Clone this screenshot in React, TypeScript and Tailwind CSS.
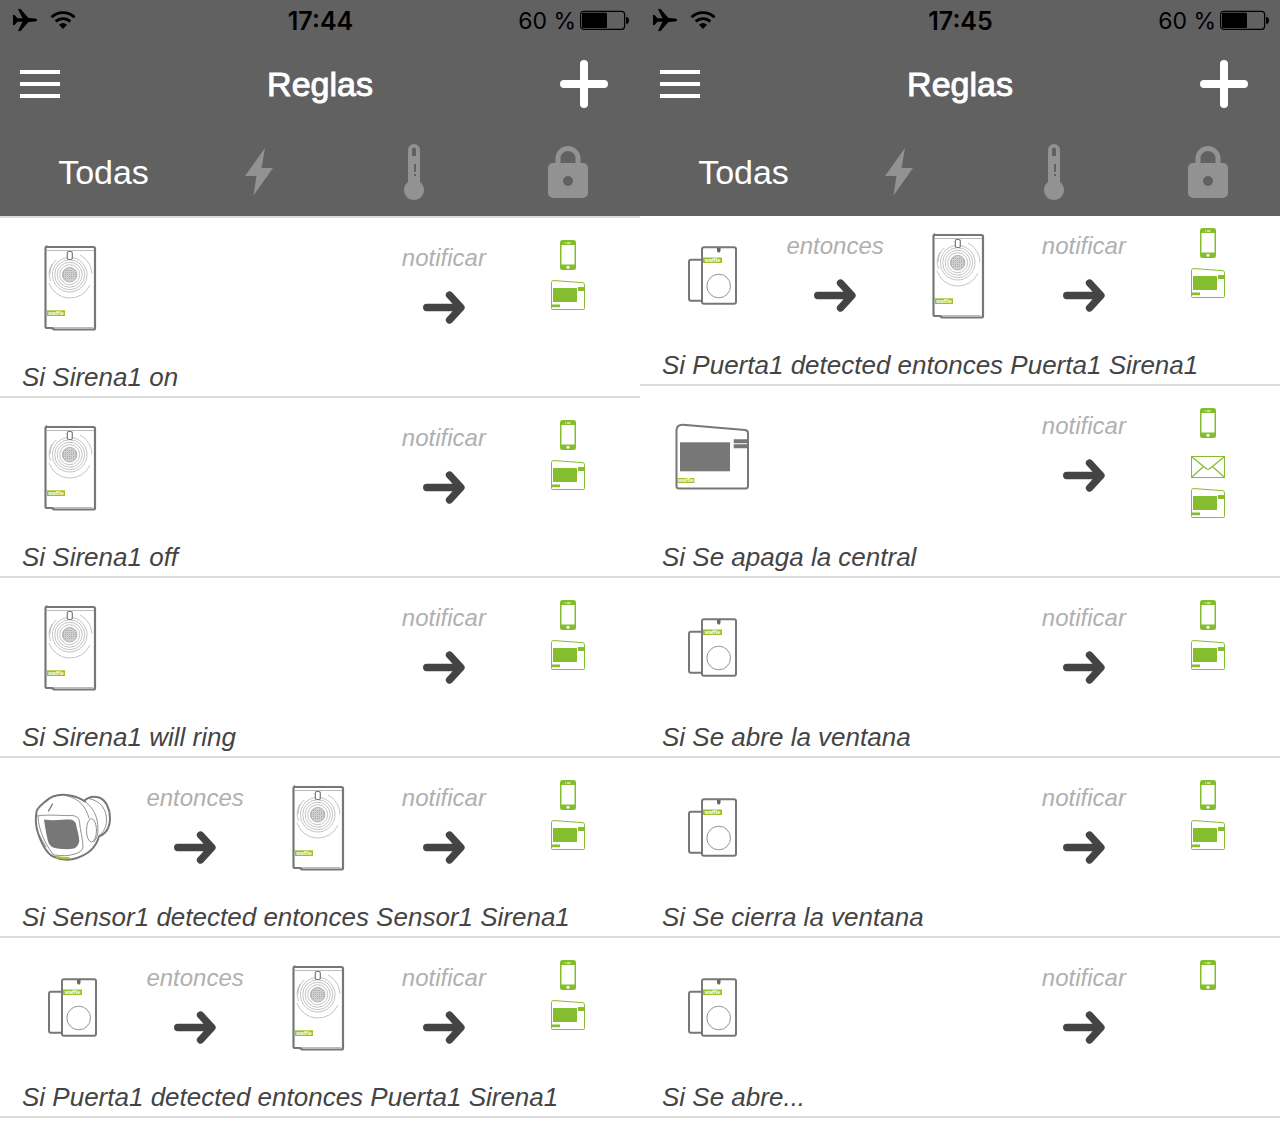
type Device = 'siren' | 'door' | 'sensor' | 'panel';
type Channel = 'phone' | 'mail' | 'panel';

interface Rule {
  trigger: Device;
  action?: Device;
  notify: Channel[];
  text: string;
}

const firstRules: Rule[] = [
  { trigger: 'siren', notify: ['phone', 'panel'], text: 'Si Sirena1 on' },
  { trigger: 'siren', notify: ['phone', 'panel'], text: 'Si Sirena1 off' },
  { trigger: 'siren', notify: ['phone', 'panel'], text: 'Si Sirena1 will ring' },
  { trigger: 'sensor', action: 'siren', notify: ['phone', 'panel'], text: 'Si Sensor1 detected entonces Sensor1 Sirena1' },
  { trigger: 'door', action: 'siren', notify: ['phone', 'panel'], text: 'Si Puerta1 detected entonces Puerta1 Sirena1' },
];

const lastRules: Rule[] = [
  { trigger: 'door', action: 'siren', notify: ['phone', 'panel'], text: 'Si Puerta1 detected entonces Puerta1 Sirena1' },
  { trigger: 'panel', notify: ['phone', 'mail', 'panel'], text: 'Si Se apaga la central' },
  { trigger: 'door', notify: ['phone', 'panel'], text: 'Si Se abre la ventana' },
  { trigger: 'door', notify: ['phone', 'panel'], text: 'Si Se cierra la ventana' },
  { trigger: 'door', notify: ['phone'], text: 'Si Se abre...' },
];

function Badge({ x, y, w, h }: { x: number; y: number; w: number; h: number }) {
  return (
    <g>
      <rect x={x} y={y} width={w} height={h} fill="#9dc02c" />
      <text x={x + w / 2} y={y + h - 1} fill="#fff" fontSize="5.500" fontWeight="bold" textAnchor="middle" fontFamily="Liberation Sans, sans-serif">
        waffle
      </text>
    </g>
  );
}

function SirenIcon() {
  return (
    <g fill="none" stroke="#777">
      <path strokeWidth="2.200" strokeLinejoin="round" d="M18.5 4h47a1.500 1.500 0 0 1 1.500 1.500v79.500a1.500 1.500 0 0 1-1.500 1.500H26l-2-1.500h-5a1.500 1.500 0 0 1-1.500-1.500v-78.500a1.500 1.500 0 0 1 1-1.500z" />
      <path stroke="#bbb" strokeWidth="1" d="M19 7.500h47M25 84.500h40" />
      <g stroke="#aaa" strokeWidth=".7">
        <circle cx="41.700" cy="31.700" r="10" />
        <circle cx="41.700" cy="31.700" r="12.500" />
        <circle cx="41.700" cy="31.700" r="15" />
        <circle cx="41.700" cy="31.700" r="17.300" />
        <path d="M24 21a20 20 0 0 0-1.500 17M52 12a22 22 0 0 1 12 19M21 40a22 22 0 0 0 41 2M22 31a20 20 0 0 1 6-14" />
      </g>
      <circle cx="41.700" cy="31.700" r="7.300" fill="#d0d0d0" stroke="#999" strokeWidth=".7" />
      <path stroke="#aaa" strokeWidth="1" strokeDasharray="1 1" d="M37 27.500h10M35 29.500h13M35 31.500h13M35 33.500h13M37 35.500h10" />
      <rect x="39.300" y="8.500" width="5" height="8" rx="1.500" fill="#fff" strokeWidth="1.200" />
      <g stroke="none">
        <Badge x={19} y={67.300} w={18} h={5.700} />
      </g>
    </g>
  );
}

function DoorIcon() {
  return (
    <g fill="none" stroke="#777">
      <rect x="21" y="28.700" width="14" height="41" rx="2" strokeWidth="2" />
      <rect x="34" y="16.300" width="34" height="56.500" rx="2" fill="#fff" strokeWidth="2" />
      <path d="M49 17h3.500v3l-1 1.500h-1.500l-1-1.500z" fill="#666" stroke="none" />
      <circle cx="50.700" cy="55" r="11.800" stroke="#888" strokeWidth=".9" />
      <g stroke="none">
        <Badge x={35} y={26.500} w={19} h={5.500} />
      </g>
    </g>
  );
}

function SensorIcon() {
  return (
    <g fill="none" stroke="#777" strokeLinecap="round" strokeLinejoin="round">
      <path strokeWidth="2" d="M56 18C60 14 66 13 71 14.500C78 17 82 26 82 35C82 44 78 51 70 54" />
      <path strokeWidth=".8" d="M61 15.500C73 18 79 27 78.500 38C78 45 75 50 71.500 52" />
      <path fill="#fff" strokeWidth="2" d="M57 18.500C50 13 35 9.500 25 13.500C21 15 10 24 8.700 28C7 36 8 44 10 50C14 62 18 70 25 73.500C33 77 42 77.500 49 75C61 71 68 63 70.500 55" />
      <path strokeWidth=".8" d="M38 12.500C53 16 58 25 61 35M57 18.500C66 25 70 35 70 46C70 51 69 55 66 59" />
      <ellipse cx="63.500" cy="47.300" rx="5" ry="11.700" strokeWidth=".8" />
      <path strokeWidth=".8" d="M9 33C20 31 35 33 44 32.500Q51 33 51.500 39C52 47 55 56 55 64Q54 69 47 71C41 73 34 73 26 72C20 66 10 48 10 33M11 52Q15 59 18 64" />
      <path fill="#777" stroke="none" d="M16 36.500C25 38 35 36.500 42 36.500Q47 37 48 41C49 47 51 52 51.300 58Q50 64 46 65.500C39 67 31 66 25 64.500Q21 62 20 58C18 51 17 43 16 36.500z" />
      <path strokeWidth="1.400" d="M24.500 21L20.500 28" />
      <path stroke="#a5c82f" strokeWidth="2.200" strokeLinecap="butt" d="M28 73.800Q35 75.200 41.500 75" />
    </g>
  );
}

function PanelIcon() {
  return (
    <g fill="#777">
      <path fill="none" stroke="#777" strokeWidth="2" d="M8.500 19Q9 13.500 15 13.700L77 19Q80 19.500 80 22V75Q80 77.500 77.500 77.500H11Q8.500 77.500 8.500 75z" />
      <rect x="12" y="31.300" width="50" height="29" />
      <path d="M65.700 28.300H80v4H65.700zM65.700 33.300H80v4H65.700z" />
      <Badge x={9.300} y={67} w={17} h={5} />
    </g>
  );
}

function DeviceIcon({ device }: { device: Device }) {
  return (
    <svg viewBox="0 0 84 90" className="h-[90px] w-[84px] shrink-0" role="img" aria-label={device}>
      {device === 'siren' && <SirenIcon />}
      {device === 'door' && <DoorIcon />}
      {device === 'sensor' && <SensorIcon />}
      {device === 'panel' && <PanelIcon />}
    </svg>
  );
}

function ChannelIcon({ channel }: { channel: Channel }) {
  return (
    <svg viewBox="0 0 34 30" className="h-[30px] w-[34px] shrink-0" role="img" aria-label={channel}>
      {channel === 'phone' && (
        <g>
          <rect x="9" width="16" height="30" rx="2.500" fill="#84bd2e" />
          <rect x="10.500" y="5" width="13" height="19.500" fill="#fff" />
          <circle cx="17" cy="27.300" r="1.500" fill="#fff" />
          <path stroke="#dcecc0" strokeWidth="1.300" d="M14 3h1M16 3h3.500" />
        </g>
      )}
      {channel === 'mail' && (
        <g fill="none" stroke="#84bd2e">
          <rect x=".5" y="8.500" width="33" height="21" />
          <path strokeWidth="1.200" d="M.5 8.500L15 20.500Q17 22 19 20.500L33.500 8.500M.5 29.500L12.500 18.500M33.500 29.500L21.500 18.500" />
        </g>
      )}
      {channel === 'panel' && (
        <g fill="#84bd2e">
          <path fill="none" stroke="#84bd2e" d="M.5 2.500Q.5.500 2.500.5L32 2.700Q33.500 3 33.500 4.500V28.500Q33.500 29.500 32.500 29.500H1.500Q.5 29.500.5 28.500z" />
          <rect x="2" y="8" width="24" height="14" rx=".5" />
          <rect x="27" y="7" width="6.500" height="4" />
          <rect x=".5" y="24.500" width="8.500" height="2.700" />
        </g>
      )}
    </svg>
  );
}

function Step({ label }: { label: string }) {
  return (
    <div className="flex flex-col items-center pt-[26px] pl-px">
      <span className="text-2xl leading-7 text-[#b0b0b0] italic">{label}</span>
      <svg viewBox="0 0 42 34" className="mt-[18px] h-[34px] w-[42px]" aria-hidden="true">
        <path d="M3.700 17.500H37M26.500 5L38 17.500L26.500 30" fill="none" stroke="#444" strokeWidth="7.300" strokeLinecap="round" strokeLinejoin="round" />
      </svg>
    </div>
  );
}

function RuleRow({ rule }: { rule: Rule }) {
  return (
    <li className="border-b-2 border-[#dcdcdc]">
      <div className="grid min-h-[120px] grid-cols-5 pr-2.5 pl-2">
        <div className="flex justify-center pt-[25px]">
          <DeviceIcon device={rule.trigger} />
        </div>
        {rule.action && <Step label="entonces" />}
        {rule.action && (
          <div className="flex justify-center pt-[25px] pr-0.5">
            <DeviceIcon device={rule.action} />
          </div>
        )}
        <div className="col-start-4">
          <Step label="notificar" />
        </div>
        <div className="flex flex-col items-center gap-2.5 pt-[22px]">
          {rule.notify.map((channel) => (
            <ChannelIcon key={channel} channel={channel} />
          ))}
        </div>
      </div>
      <p className="truncate px-[22px] pt-[23px] pb-[3px] text-[26px] leading-8 text-[#444] italic">{rule.text}</p>
    </li>
  );
}

function StatusBar({ time }: { time: string }) {
  return (
    <div className="grid h-10 grid-cols-3 items-center pr-[11px] pl-3 font-['Inter',sans-serif] text-black">
      <div className="flex items-center gap-3">
        <svg viewBox="0 0 26 24" className="h-6 w-[26px]" aria-label="Modo avión" role="img">
          <path d="M1 7h1.500L5.500 10.300L10.500 10.300L6 1h2.600L16.500 10.100L23 10.400q2.200.4 2.200 1.600t-2.200 1.600L16.500 13.900L8.600 23H6l4.500-9.300L5.500 13.700L2.500 17H1V7z" />
        </svg>
        <svg viewBox="0 0 26 20" className="h-5 w-[26px]" aria-label="Wi-Fi" role="img">
          <path fill="none" stroke="#000" strokeWidth="2.800" d="M1.500 7.200a16.500 16.500 0 0 1 23 0M5.700 11.500a10.500 10.500 0 0 1 14.600 0" />
          <path d="M13 19l-4-4.300q4-3.400 8 0z" />
        </svg>
      </div>
      <span className="pt-0.5 text-center text-[25px] leading-8 font-semibold">{time}</span>
      <div className="flex items-center justify-end gap-1">
        <span className="pt-0.5 text-[23px] leading-8 whitespace-nowrap">60 %</span>
        <svg viewBox="0 0 49 20" className="h-5 w-[49px]" aria-hidden="true">
          <rect x=".6" y="1.300" width="44" height="18" rx="3" fill="none" stroke="#000" strokeWidth="1.200" />
          <rect x="2" y="2.700" width="25" height="15.200" rx="1" />
          <path d="M46 7q3 0 3 3.400t-3 3.400z" />
        </svg>
      </div>
    </div>
  );
}

function Header({ time }: { time: string }) {
  return (
    <header className="bg-[#616161] text-white">
      <StatusBar time={time} />
      <div className="grid h-22 grid-cols-[1fr_auto_1fr] items-center pr-8 pl-5">
        <button type="button" aria-label="Menú" className="flex w-10 flex-col gap-2">
          <span className="h-1 w-full bg-white" />
          <span className="h-1 w-full bg-white" />
          <span className="h-1 w-full bg-white" />
        </button>
        <h1 className="pl-3 text-[34px] leading-10 [-webkit-text-stroke:1px_white]">Reglas</h1>
        <button type="button" aria-label="Añadir regla" className="justify-self-end">
          <svg viewBox="0 0 48 48" className="size-12">
            <path fill="none" stroke="#fff" strokeWidth="8" strokeLinecap="round" d="M24 4v40M4 24h40" />
          </svg>
        </button>
      </div>
      <nav className="flex h-22 items-center pl-[26px] text-[#929292]">
        <button type="button" className="flex-1 text-[34px] leading-10 text-white">
          Todas
        </button>
        <button type="button" aria-label="Energía" className="flex flex-1 justify-center">
          <svg viewBox="0 0 28 48" className="h-12 w-7" fill="currentColor">
            <path d="M20 0L16.500 20H28L8.500 47.500L11.500 28H0z" />
          </svg>
        </button>
        <button type="button" aria-label="Temperatura" className="flex flex-1 justify-center">
          <svg viewBox="0 0 20 56" className="h-14 w-5" fill="currentColor">
            <path fillRule="evenodd" d="M4 6a6 6 0 0 1 12 0v32a10 10 0 1 1-12 0zM8 5.500V12h4V5.500a2 2 0 0 0-4 0zM10 20v8h2v-8zM10 30v2h2v-2z" />
          </svg>
        </button>
        <button type="button" aria-label="Seguridad" className="flex w-[149px] justify-center pl-1">
          <svg viewBox="0 0 40 54" className="h-[54px] w-10" fill="currentColor">
            <path fill="none" stroke="currentColor" strokeWidth="5" d="M10 20v-6.500a10 10 0 0 1 20 0V20" />
            <path fillRule="evenodd" d="M5 18h30a5 5 0 0 1 5 5v25a5 5 0 0 1-5 5H5a5 5 0 0 1-5-5V23a5 5 0 0 1 5-5zM20 31a5 5 0 1 0 0 10a5 5 0 0 0 0-10z" />
          </svg>
        </button>
      </nav>
    </header>
  );
}

export default function App() {
  return (
    <main className="grid min-h-screen grid-cols-2 bg-white font-['Liberation_Sans',Arial,sans-serif]">
      <section className="min-w-0">
        <Header time="17:44" />
        <ul className="border-t-2 border-[#dcdcdc]">
          {firstRules.map((rule) => (
            <RuleRow key={rule.text} rule={rule} />
          ))}
        </ul>
      </section>
      <section className="min-w-0">
        <Header time="17:45" />
        {/* list is scrolled slightly under the header */}
        <div className="overflow-hidden">
          <ul className="-mt-2.5">
            {lastRules.map((rule) => (
              <RuleRow key={rule.text} rule={rule} />
            ))}
          </ul>
        </div>
      </section>
    </main>
  );
}
